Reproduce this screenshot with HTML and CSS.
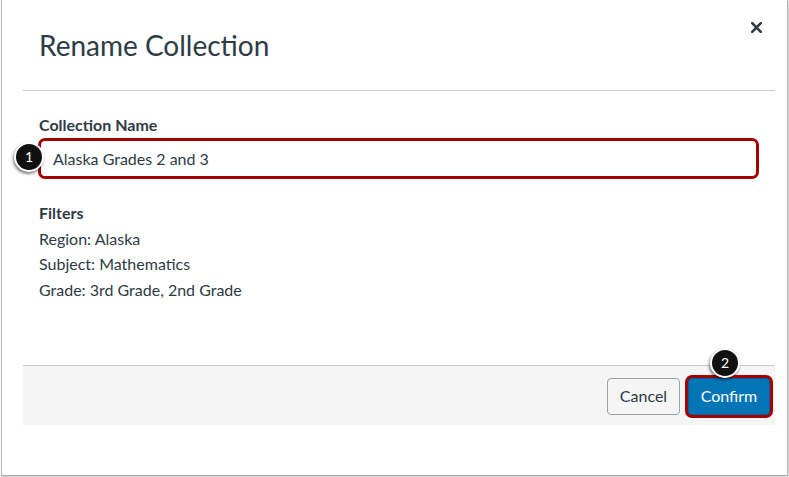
FILE: index.html
```html
<!DOCTYPE html>
<html lang="en">
<head>
<meta charset="utf-8">
<title>Rename Collection</title>
<link rel="stylesheet" href="styles.css">
</head>
<body>
<div class="frame">
  <div class="dialog">
    <header class="dialog-header">
      <h1 class="dialog-title">Rename Collection</h1>
      <button class="close-btn" aria-label="Close">
        <svg width="11" height="11" viewBox="0 0 11 11"><path d="M1.2 1.2 L9.8 9.8 M9.8 1.2 L1.2 9.8" stroke="#2d3b45" stroke-width="2.6" stroke-linecap="round"/></svg>
      </button>
    </header>
    <main class="dialog-body">
      <div class="field-label">Collection Name</div>
      <div class="field">
        <div class="text-input">Alaska Grades 2 and 3</div>
        <span class="badge badge-one">1</span>
      </div>
      <div class="filters">
        <div class="filters-title">Filters</div>
        <div>Region: Alaska</div>
        <div>Subject: Mathematics</div>
        <div>Grade: 3rd Grade, 2nd Grade</div>
      </div>
    </main>
    <footer class="dialog-footer">
      <button class="btn btn-secondary">Cancel</button>
      <div class="confirm-wrap">
        <button class="btn btn-primary">Confirm</button>
        <span class="badge badge-two">2</span>
      </div>
    </footer>
  </div>
</div>
</body>
</html>
```
FILE: styles.css
```css
* { box-sizing: border-box; }
html, body { margin: 0; padding: 0; background: #ffffff; }
body {
  font-family: Lato, "Noto Sans", "Liberation Sans", sans-serif;
  color: #2d3b45;
  width: 789px;
  height: 477px;
  overflow: hidden;
}
.frame {
  width: 787px;
  height: 476px;
  margin-left: 1px;
  border-left: 1px solid #b9b9b9;
  border-right: 1px solid #b9b9b9;
  border-bottom: 1px solid #a9a9a9;
  box-shadow: 1px 1px 2px rgba(0,0,0,0.25);
  padding: 0 12px 0 21px;
  background: #fff;
}
.dialog {
  height: 425px;
  display: flex;
  flex-direction: column;
}
.dialog-header {
  height: 91px;
  border-bottom: 1px solid #c7cdd1;
  display: flex;
  justify-content: space-between;
  align-items: flex-start;
  padding: 0 7px 0 16px;
}
.dialog-title {
  margin: 27px 0 0 0;
  font-size: 28px;
  line-height: 36px;
  font-weight: 400;
  color: #2d3b45;
}
.close-btn {
  margin-top: 15px;
  width: 24px;
  height: 24px;
  border: 0;
  background: transparent;
  padding: 0;
  display: flex;
  align-items: center;
  justify-content: center;
}
.dialog-body {
  flex: 1;
  padding: 22px 16px 0 16px;
  font-size: 16px;
}
.field-label {
  font-weight: 700;
  line-height: 24px;
  margin-bottom: 1px;
}
.field {
  position: relative;
  margin-left: -1px;
}
.text-input {
  height: 41px;
  border: 3px solid #a30000;
  border-radius: 7px;
  padding: 0 12px;
  line-height: 24px;
  display: flex;
  align-items: center;
  font-size: 16px;
  color: #2d3b45;
  background: #fff;
}
.filters {
  margin-top: 21px;
  line-height: 25.6px;
}
.filters-title { font-weight: 700; }
.dialog-footer {
  height: 60px;
  border-top: 1px solid #c7cdd1;
  background: #f5f5f5;
  display: flex;
  justify-content: flex-end;
  align-items: center;
  padding: 1px 5px 0 0;
  gap: 8px;
}
.btn {
  font-family: Lato, "Noto Sans", "Liberation Sans", sans-serif;
  font-size: 16px;
  height: 37px;
  border-radius: 4px;
  padding: 0;
  line-height: 24px;
}
.btn-secondary {
  width: 73px;
  background: #f5f5f5;
  border: 1px solid #98a2a9;
  color: #2d3b45;
}
.confirm-wrap { position: relative; }
.btn-primary {
  display: block;
  width: 82px;
  background: #0374b5;
  border: 1px solid #02609a;
  color: #fff;
  box-shadow: 0 0 0 3px #a30000;
}
.badge {
  position: absolute;
  width: 30px;
  height: 30px;
  border-radius: 50%;
  background: #111;
  border: 2px solid #fff;
  box-shadow: -1px 2px 3px rgba(0,0,0,0.5);
  color: #fff;
  font-size: 14px;
  line-height: 26px;
  text-align: center;
  font-family: Lato, "Noto Sans", "Liberation Sans", sans-serif;
}
.badge-one {
  left: -24px;
  top: 4px;
}
.badge-two {
  left: 22px;
  top: -30px;
}
```
